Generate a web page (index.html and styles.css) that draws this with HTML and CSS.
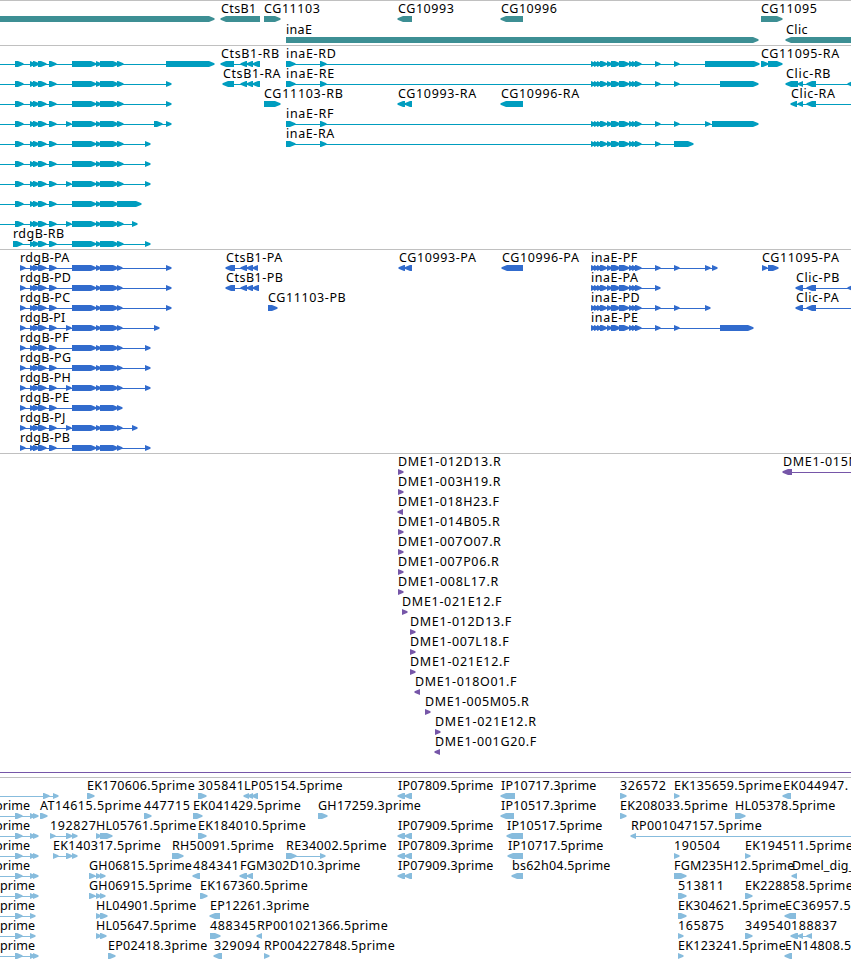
FILE: index.html
```
<!DOCTYPE html>
<html lang="en">
<head>
  <meta charset="UTF-8">
  <title>Genome Browser</title>
  <link rel="stylesheet" href="styles.css">
</head>
<body>
  <main class="browser">
    <section class="track genes" id="genes"></section>
    <section class="track transcripts" id="transcripts"></section>
    <section class="track proteins" id="proteins"></section>
    <section class="track bacs" id="bacs"></section>
    <section class="track ests" id="ests"></section>
  </main>
  <script src="tracks.js"></script>
</body>
</html>
```

FILE: styles.css
```
body {
  margin: 0;
  background: #ffffff;
  font-family: "Noto Sans", "DejaVu Sans", sans-serif;
  font-size: 12.5px;
}
.browser {
  width: 851px;
  overflow: hidden;
  border-bottom: 1px solid #c0c0c0;
}
.track {
  display: flex;
  flex-direction: column;
  border-top: 1px solid #c0c0c0;
  padding-bottom: 3px;
}
.row {
  display: block;
  width: 851px;
  height: 20px;
  overflow: visible;
}
.row text {
  fill: #000000;
  white-space: pre;
}
.row path {
  fill: currentColor;
}
.genes {
  color: #3d8f94;
  padding-bottom: 2px;
}
.genes .row {
  height: 21px;
}
.transcripts {
  color: #009dbf;
}
.proteins {
  color: #316bcd;
}
.bacs {
  color: #7656a8;
}
.ests {
  color: #87bcdd;
}
```

FILE: tracks.js
```
const SVG = "http://www.w3.org/2000/svg";
const END = 860; // past the right edge of the view

// exons shared by several transcripts
const rdgB = "30-35 33-39 38-46 49-56";
const rdgBMid = "72-96 96-101 100-118";
const inaE = "591-596 594-599 597-602 600-607 607-612 611-620 619-629 629-634 632-637 635-641";

// feature: [label, label x, strand, exons, line start, line end]
function rdg(label, x, first, extra, last) {
  return [label, x, "+", [first, rdgB, extra, rdgBMid, last].join(" "), label ? x : 0];
}

const tracks = {
  genes: [
    [["", 0, "+", "-20-214"], ["CtsB1", 221, "-", "221-260"], ["CG11103", 264, "+", "264-280"],
     ["CG10993", 398, "-", "398-412"], ["CG10996", 501, "-", "501-523"], ["CG11095", 761, "+", "761-782"]],
    [["inaE", 286, "+", "286-758"], ["Clic", 786, "-", "786-860"]]
  ],
  transcripts: [
    [rdg("", 0, "15-23", "", "117-123 166-214"),
     ["CtsB1-RB", 221, "-", "221-234 241-247 247-253 253-260"],
     ["inaE-RD", 286, "+", "286-295 320-326 " + inaE + " 655-660 674-679 705-759"],
     ["CG11095-RA", 761, "+", "761-768 768-782"]],
    [rdg("", 0, "15-23", "", "117-123 166-171"),
     ["CtsB1-RA", 223, "-", "223-234 241-247 247-253 253-260"],
     ["inaE-RE", 286, "+", "286-295 320-326 " + inaE + " 655-660 674-679 720-758"],
     ["Clic-RB", 786, "-", "786-798 798-803 807-816 848-860"]],
    [rdg("", 0, "15-23", "", "117-123 166-171"),
     ["CG11103-RB", 264, "+", "264-280"],
     ["CG10993-RA", 398, "-", "398-405 405-412"],
     ["CG10996-RA", 501, "-", "501-523"],
     ["Clic-RA", 791, "-", "791-797 798-803 807-816", 791, END]],
    [rdg("", 0, "15-23", "66-71", "117-123 154-162 166-171"),
     ["inaE-RF", 286, "+", "286-295 320-326 " + inaE + " 655-660 674-679 705-710 712-758"]],
    [rdg("", 0, "15-23", "", "117-123 145-150"),
     ["inaE-RA", 286, "+", "286-295 320-326 " + inaE + " 655-660 674-693"]],
    [rdg("", 0, "15-23", "", "117-123 145-150")],
    [rdg("", 0, "15-23", "66-71", "117-123 145-150")],
    [rdg("", 0, "15-23", "", "117-141")],
    [rdg("", 0, "15-23", "66-71", "117-123 132-137")],
    [rdg("rdgB-RB", 13, "13-22", "", "117-123 145-150")]
  ],
  proteins: [
    [rdg("rdgB-PA", 20, "20-25", "", "117-122 166-171"),
     ["CtsB1-PA", 226, "-", "226-235 241-247 247-253 253-258"],
     ["CG10993-PA", 399, "-", "399-405 405-412"],
     ["CG10996-PA", 502, "-", "502-523"],
     ["inaE-PF", 591, "+", inaE + " 655-660 674-679 705-710 712-717"],
     ["CG11095-PA", 762, "+", "762-767 768-778"]],
    [rdg("rdgB-PD", 20, "20-25", "", "117-122 166-171"),
     ["CtsB1-PB", 226, "-", "226-235 241-247 247-253 253-259"],
     ["inaE-PA", 591, "+", inaE + " 655-660"],
     ["Clic-PB", 796, "-", "796-803 807-816 848-860"]],
    [rdg("rdgB-PC", 20, "20-25", "", "117-122 166-171"),
     ["CG11103-PB", 268, "+", "268-277"],
     ["inaE-PD", 591, "+", inaE + " 655-660 674-679 705-710"],
     ["Clic-PA", 796, "-", "796-803 807-816", 796, END]],
    [rdg("rdgB-PI", 20, "20-25", "66-71", "117-122 154-159"),
     ["inaE-PE", 591, "+", inaE + " 655-660 674-679 720-753"]],
    [rdg("rdgB-PF", 20, "20-25", "", "117-122 145-150")],
    [rdg("rdgB-PG", 20, "20-25", "", "117-122 145-150")],
    [rdg("rdgB-PH", 20, "20-25", "66-71", "117-122 145-150")],
    [rdg("rdgB-PE", 20, "20-25", "", "117-122")],
    [rdg("rdgB-PJ", 20, "20-25", "66-71", "117-122 132-137")],
    [rdg("rdgB-PB", 20, "20-25", "", "117-122 145-150")]
  ],
  bacs: [
    [["DME1-012D13.R", 398, "+", "398-403"], ["DME1-015N", 783, "-", "783-792", 783, END]],
    [["DME1-003H19.R", 398, "+", "398-403"]],
    [["DME1-018H23.F", 398, "-", "398-403"]],
    [["DME1-014B05.R", 398, "+", "398-403"]],
    [["DME1-007O07.R", 398, "+", "398-403"]],
    [["DME1-007P06.R", 398, "+", "398-403"]],
    [["DME1-008L17.R", 398, "+", "398-403"]],
    [["DME1-021E12.F", 402, "+", "402-407"]],
    [["DME1-012D13.F", 410, "+", "410-415"]],
    [["DME1-007L18.F", 410, "+", "410-415"]],
    [["DME1-021E12.F", 410, "+", "410-415"]],
    [["DME1-018O01.F", 415, "-", "415-420"]],
    [["DME1-005M05.R", 425, "+", "425-430"]],
    [["DME1-021E12.R", 435, "+", "435-440"]],
    [["DME1-001G20.F", 435, "-", "435-440"]],
    [["", 0, "+", "", 0, END]]
  ],
  ests: [
    [["", 0, "+", "43-49 53-58", 0],
     ["EK170606.5prime", 87, "+", "87-94"], ["305841", 198, "+", "198-206"],
     ["LP05154.5prime", 244, "-", "244-249 248-253 252-258"],
     ["IP07809.5prime", 398, "-", "398-405 405-412"], ["IP10717.3prime", 501, "-", "501-515"],
     ["326572", 620, "+", "620-626"], ["EK135659.5prime", 674, "+", "674-679"],
     ["EK044947.", 783, "-", "783-791"]],
    [["prime", -5, "+", "15-22 30-35 33-38", 0],
     ["AT14615.5prime", 40, "+", "40-47"], ["447715", 144, "+", "144-151"],
     ["EK041429.5prime", 193, "+", "193-202"], ["GH17259.3prime", 318, "+", "318-327"],
     ["IP10517.3prime", 501, "-", "501-514"], ["EK208033.5prime", 620, "+", "620-626"],
     ["HL05378.5prime", 735, "+", "735-745"]],
    [["prime", -5, "+", "15-22 30-35 33-38", 0],
     ["192827", 50, "+", "50-55 66-72 72-77"], ["HL05761.5prime", 96, "+", "96-101 100-112"],
     ["EK184010.5prime", 198, "+", "198-206"], ["IP07909.5prime", 398, "-", "398-405 405-412"],
     ["IP10517.5prime", 507, "-", "507-523"], ["RP001047157.5prime", 631, "-", "631-636", 631, END]],
    [["prime", -5, "+", "15-22 30-35 33-38", 0],
     ["EK140317.5prime", 53, "+", "53-58 66-72 72-77"], ["RH50091.5prime", 172, "+", "172-183"],
     ["RE34002.5prime", 286, "+", "286-296 320-325"], ["IP07809.3prime", 398, "-", "398-405 405-412"],
     ["IP10717.5prime", 508, "-", "508-523"], ["190504", 674, "+", "674-679"],
     ["EK194511.5prime", 745, "+", "745-750"]],
    [["prime", -5, "+", "15-22 30-35 33-38", 0],
     ["GH06815.5prime", 89, "+", "89-95 96-101 100-105"], ["484341", 193, "-", "193-200"],
     ["FGM302D10.3prime", 240, "-", "240-247 247-253"], ["IP07909.3prime", 398, "-", "398-405 405-412"],
     ["bs62h04.5prime", 512, "-", "512-523"], ["FGM235H12.5prime", 674, "+", "674-686"],
     ["Dmel_dig_", 792, "-", "792-797"]],
    [["prime", 0, "+", "15-22 30-35 33-38", 0],
     ["GH06915.5prime", 89, "+", "89-95 96-101 100-105"], ["EK167360.5prime", 200, "+", "200-207"],
     ["513811", 678, "+", "678-686"], ["EK228858.5prime", 745, "+", "745-752"]],
    [["prime", 0, "+", "15-22 30-35", 0],
     ["HL04901.5prime", 96, "+", "96-101 100-107"], ["EP12261.3prime", 210, "-", "210-220"],
     ["EK304621.5prime", 678, "+", "678-686"], ["EC36957.5", 785, "-", "785-796"]],
    [["prime", 0, "+", "15-22 30-35", 0],
     ["HL05647.5prime", 96, "+", "96-101 100-106"], ["488345", 210, "+", "210-220"],
     ["RP001021366.5prime", 257, "-", "257-262"], ["165875", 678, "+", "678-683"],
     ["349540", 745, "+", "745-752"], ["188837", 791, "-", "791-798 798-803 807-812"]],
    [["prime", 0, "+", "15-22 30-35 33-38", 0],
     ["EP02418.3prime", 108, "+", "108-115"], ["329094", 214, "-", "214-222"],
     ["RP004227848.5prime", 264, "+", "264-269"], ["EK123241.5prime", 678, "+", "678-683"],
     ["EN14808.5", 785, "-", "785-792"]]
  ]
};

// block with a 5px arrow head on the strand side
function exonPath(start, end, strand) {
  if (strand === "+") {
    return `M${start} 15H${end - 5}L${end + 0.5} 17.2V18.8L${end - 5} 21H${start}Z`;
  }
  return `M${end} 15H${start + 5}L${start - 0.5} 17.2V18.8L${start + 5} 21H${end}Z`;
}

const ruler = document.createElement("canvas").getContext("2d");
ruler.font = '12px "DejaVu Sans"';
function labelWidth(label) {
  let width = ruler.measureText(label).width;
  if (label.includes("-")) width += 2;
  if (/^(DME|AT)/.test(label)) width += 2;
  return width;
}

function drawFeature(row, [label, x, strand, exons, from, to]) {
  const blocks = [...exons.matchAll(/(-?\d+)-(\d+)/g)].map(m => [+m[1], +m[2]]);
  const start = from !== undefined ? from : blocks[0][0];
  const end = to !== undefined ? to : blocks[blocks.length - 1][1];
  if (blocks.length !== 1 || to !== undefined) {
    const a = strand === "-" ? start + 2 : start;
    const b = strand === "+" ? end - 2 : end;
    const line = document.createElementNS(SVG, "path");
    line.setAttribute("d", `M${a} 18H${b}V19H${a}Z`);
    row.appendChild(line);
  }
  for (const [s, e] of blocks) {
    const exon = document.createElementNS(SVG, "path");
    exon.setAttribute("d", exonPath(s, e, strand));
    row.appendChild(exon);
  }
  if (label) {
    const text = document.createElementNS(SVG, "text");
    text.setAttribute("x", x);
    text.setAttribute("y", 12);
    text.setAttribute("textLength", labelWidth(label).toFixed(1));
    text.textContent = label;
    row.appendChild(text);
  }
}

for (const id in tracks) {
  const track = document.getElementById(id);
  for (const features of tracks[id]) {
    const row = document.createElementNS(SVG, "svg");
    row.setAttribute("class", "row");
    features.forEach(f => drawFeature(row, f));
    track.appendChild(row);
  }
}
```
